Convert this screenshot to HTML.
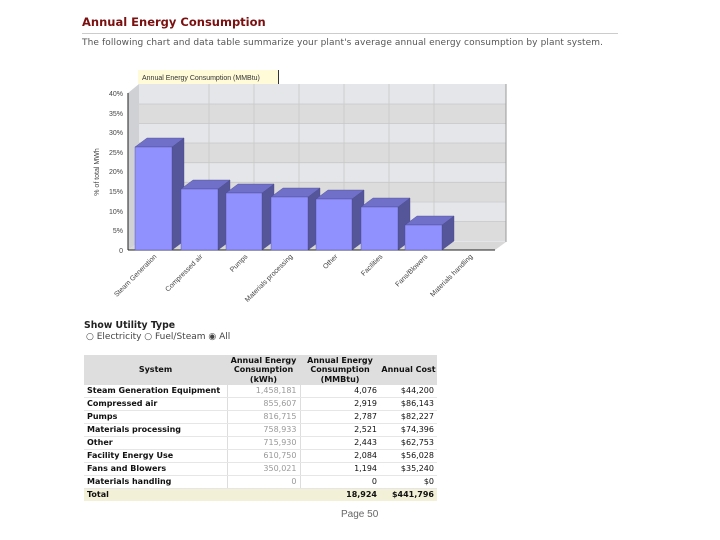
<!DOCTYPE html>
<html><head><meta charset="utf-8"><style>
body{margin:0;width:720px;height:540px;background:#fff;font-family:"DejaVu Sans","Liberation Sans",sans-serif;position:relative;overflow:hidden}
.a{position:absolute}
table{border-collapse:collapse;font-size:8px;color:#111;table-layout:fixed}
td{padding:0 3px;height:12px;line-height:12px;white-space:nowrap;overflow:hidden}
td.k{color:#999;text-align:right;border-left:1px solid #ddd;border-right:1px solid #ddd}
td.r{text-align:right}
tr.b td{border-bottom:1px solid #e6e6e6}
th{background:#dedede;font-size:8px;line-height:9.5px;height:30px;padding:0 1px;font-weight:bold;white-space:nowrap}
</style></head><body>
<div class="a" style="left:82px;top:15px;font-weight:bold;font-size:11.5px;color:#7a1010">Annual Energy Consumption</div>
<div class="a" style="left:82px;top:33px;width:536px;border-top:1px solid #ccc"></div>
<div class="a" style="left:82px;top:38px;font-size:9px;color:#555;letter-spacing:0.1px">The following chart and data table summarize your plant's average annual energy consumption by plant system.</div>
<svg class="a" style="left:0;top:0" width="720" height="320" font-family="Liberation Sans,sans-serif">
<rect x="138" y="70" width="141" height="14" fill="#fffbd8"/>
<line x1="278.5" y1="70" x2="278.5" y2="84" stroke="#333"/>
<text x="142" y="80" font-size="7" fill="#333">Annual Energy Consumption (MMBtu)</text>
<polygon points="139,84 506,84 506,242 139,242" fill="#e4e6ea"/>
<g fill="#dcdcdc">
<rect x="139" y="104" width="367" height="19.6"/><rect x="139" y="143" width="367" height="19.6"/><rect x="139" y="182" width="367" height="19.6"/><rect x="139" y="221.5" width="367" height="19.6"/>
</g>
<g stroke="#c8c8c8" stroke-width="0.8">
<line x1="139" y1="104" x2="506" y2="104"/><line x1="139" y1="123.6" x2="506" y2="123.6"/><line x1="139" y1="143" x2="506" y2="143"/><line x1="139" y1="162.7" x2="506" y2="162.7"/><line x1="139" y1="182.3" x2="506" y2="182.3"/><line x1="139" y1="202" x2="506" y2="202"/><line x1="139" y1="221.5" x2="506" y2="221.5"/>
<line x1="209" y1="84" x2="209" y2="242"/><line x1="254" y1="84" x2="254" y2="242"/><line x1="299" y1="84" x2="299" y2="242"/><line x1="344" y1="84" x2="344" y2="242"/><line x1="389" y1="84" x2="389" y2="242"/><line x1="434" y1="84" x2="434" y2="242"/>
</g>
<line x1="506" y1="84" x2="506" y2="242" stroke="#999"/>
<polygon points="128,93 139,84 139,242 128,250" fill="#cfd1d4"/>
<polygon points="128,250 139,242 506,242 495,250" fill="#d8d8d8"/>
<line x1="128" y1="93" x2="128" y2="250" stroke="#222"/>
<line x1="128" y1="250" x2="495" y2="250" stroke="#222"/>
<g font-size="7" fill="#444" text-anchor="end">
<text x="123" y="96">40%</text><text x="123" y="116">35%</text><text x="123" y="135">30%</text><text x="123" y="155">25%</text><text x="123" y="174">20%</text><text x="123" y="194">15%</text><text x="123" y="214">10%</text><text x="123" y="233">5%</text><text x="123" y="253">0</text>
</g>
<text transform="translate(99,172) rotate(-90)" font-size="7" fill="#444" text-anchor="middle">% of total MWh</text>
<g fill="#9090ff" stroke="#4a4a90" stroke-width="0.4">
<polygon points="172,147 184,138 184,241 172,250" fill="#55559a"/><polygon points="135,147 147,138 184,138 172,147" fill="#7070c8"/><rect x="135" y="147" width="37" height="103"/>
<polygon points="218,189 230,180 230,241 218,250" fill="#55559a"/><polygon points="181,189 193,180 230,180 218,189" fill="#7070c8"/><rect x="181" y="189" width="37" height="61"/>
<polygon points="262,193 274,184 274,241 262,250" fill="#55559a"/><polygon points="226,193 238,184 274,184 262,193" fill="#7070c8"/><rect x="226" y="193" width="36" height="57"/>
<polygon points="308,197 320,188 320,241 308,250" fill="#55559a"/><polygon points="271,197 283,188 320,188 308,197" fill="#7070c8"/><rect x="271" y="197" width="37" height="53"/>
<polygon points="352,199 364,190 364,241 352,250" fill="#55559a"/><polygon points="316,199 328,190 364,190 352,199" fill="#7070c8"/><rect x="316" y="199" width="36" height="51"/>
<polygon points="398,207 410,198 410,241 398,250" fill="#55559a"/><polygon points="361,207 373,198 410,198 398,207" fill="#7070c8"/><rect x="361" y="207" width="37" height="43"/>
<polygon points="442,225 454,216 454,241 442,250" fill="#55559a"/><polygon points="405,225 417,216 454,216 442,225" fill="#7070c8"/><rect x="405" y="225" width="37" height="25"/>
</g>
<g font-size="7" fill="#444" text-anchor="end">
<text transform="translate(157,257) rotate(-45)">Steam Generation</text>
<text transform="translate(203,257) rotate(-45)">Compressed air</text>
<text transform="translate(248,257) rotate(-45)">Pumps</text>
<text transform="translate(293,257) rotate(-45)">Materials processing</text>
<text transform="translate(338,257) rotate(-45)">Other</text>
<text transform="translate(383,257) rotate(-45)">Facilities</text>
<text transform="translate(428,257) rotate(-45)">Fans/Blowers</text>
<text transform="translate(473,257) rotate(-45)">Materials handling</text>
</g>
</svg>
<div class="a" style="left:84px;top:320px;font-weight:bold;font-size:9.3px;color:#222">Show Utility Type</div>
<div class="a" style="left:86px;top:332px;font-size:9px;color:#444">○ Electricity ○ Fuel/Steam ◉ All</div>
<table class="a" style="left:84px;top:355px;width:353px">
<colgroup><col style="width:143px"><col style="width:73px"><col style="width:80px"><col style="width:57px"></colgroup>
<tr><th>System</th><th>Annual Energy<br>Consumption<br>(kWh)</th><th>Annual Energy<br>Consumption<br>(MMBtu)</th><th>Annual Cost</th></tr>
<tr class="b"><td><b>Steam Generation Equipment</b></td><td class="k">1,458,181</td><td class="r">4,076</td><td class="r">$44,200</td></tr>
<tr class="b"><td><b>Compressed air</b></td><td class="k">855,607</td><td class="r">2,919</td><td class="r">$86,143</td></tr>
<tr class="b"><td><b>Pumps</b></td><td class="k">816,715</td><td class="r">2,787</td><td class="r">$82,227</td></tr>
<tr class="b"><td><b>Materials processing</b></td><td class="k">758,933</td><td class="r">2,521</td><td class="r">$74,396</td></tr>
<tr class="b"><td><b>Other</b></td><td class="k">715,930</td><td class="r">2,443</td><td class="r">$62,753</td></tr>
<tr class="b"><td><b>Facility Energy Use</b></td><td class="k">610,750</td><td class="r">2,084</td><td class="r">$56,028</td></tr>
<tr class="b"><td><b>Fans and Blowers</b></td><td class="k">350,021</td><td class="r">1,194</td><td class="r">$35,240</td></tr>
<tr class="b"><td><b>Materials handling</b></td><td class="k">0</td><td class="r">0</td><td class="r">$0</td></tr>
<tr style="background:#f3f0d8"><td><b>Total</b></td><td></td><td class="r"><b>18,924</b></td><td class="r"><b>$441,796</b></td></tr>
</table>
<div class="a" style="left:341px;top:509px;font-size:10px;color:#666;font-family:'Liberation Sans',sans-serif">Page 50</div>
</body></html>
